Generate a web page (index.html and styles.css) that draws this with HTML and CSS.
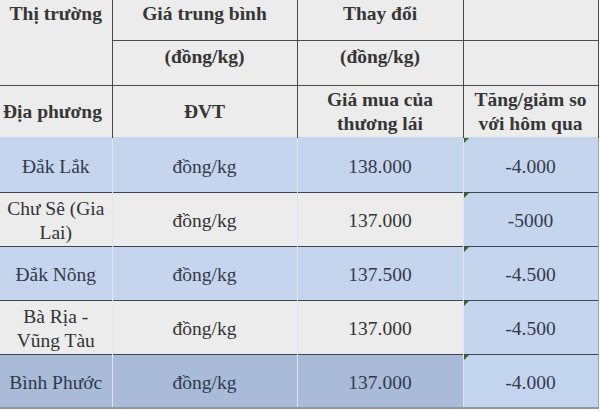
FILE: index.html
```html
<!DOCTYPE html>
<html lang="vi">
<head>
<meta charset="utf-8">
<link rel="stylesheet" href="styles.css">
</head>
<body>
<table class="price">
  <colgroup>
    <col class="c1"><col class="c2"><col class="c3"><col class="c4">
  </colgroup>
  <thead>
    <tr class="h1">
      <th rowspan="2" class="top">Thị trường</th>
      <th>Giá trung bình</th>
      <th>Thay đổi</th>
      <th></th>
    </tr>
    <tr class="h2">
      <th>(đồng/kg)</th>
      <th>(đồng/kg)</th>
      <th></th>
    </tr>
    <tr class="h3">
      <th>Địa phương</th>
      <th>ĐVT</th>
      <th>Giá mua của thương lái</th>
      <th>Tăng/giảm so với hôm qua</th>
    </tr>
  </thead>
  <tbody>
    <tr class="blue">
      <td>Đắk Lắk</td><td>đồng/kg</td><td>138.000</td><td class="chg"><span class="flag"></span>-4.000</td>
    </tr>
    <tr class="grey">
      <td>Chư Sê (Gia Lai)</td><td>đồng/kg</td><td>137.000</td><td class="chg"><span class="flag"></span>-5000</td>
    </tr>
    <tr class="blue">
      <td>Đắk Nông</td><td>đồng/kg</td><td>137.500</td><td class="chg"><span class="flag"></span>-4.500</td>
    </tr>
    <tr class="grey">
      <td>Bà Rịa - Vũng Tàu</td><td>đồng/kg</td><td>137.000</td><td class="chg"><span class="flag"></span>-4.500</td>
    </tr>
    <tr class="dark last">
      <td>Bình Phước</td><td>đồng/kg</td><td>137.000</td><td class="chg"><span class="flag"></span>-4.000</td>
    </tr>
  </tbody>
</table>
</body>
</html>
```
FILE: styles.css
```css
html, body {
  margin: 0;
  padding: 0;
  background: #ffffff;
}
.price {
  border-collapse: collapse;
  table-layout: fixed;
  width: 598px;
  font-family: "Liberation Serif", "Times New Roman", serif;
  font-size: 19.5px;
  color: #333333;
}
.c1 { width: 112px; }
.c2 { width: 185px; }
.c3 { width: 166px; }
.c4 { width: 135px; }

.price th {
  background: #ececec;
  font-weight: bold;
  color: #363636;
  text-align: center;
  border-left: 1px solid #4a4a4a;
  border-right: 1px solid #4a4a4a;
  padding: 0 3px;
  line-height: 22px;
}
.price th:first-child { border-left: none; }
.h1 th { height: 40px; vertical-align: top; padding-top: 3px; border-bottom: 1px solid #4a4a4a; box-sizing: border-box; }
.h2 th { height: 45px; vertical-align: top; padding-top: 5px; border-bottom: 1px solid #4a4a4a; box-sizing: border-box; }
.h3 th { height: 52px; vertical-align: middle; padding-top: 2px; box-sizing: border-box; line-height: 24px; }
.h3 th:first-child { text-align: left; padding-left: 3px; padding-right: 0; }

.price td {
  text-align: center;
  vertical-align: middle;
  height: 54px;
  box-sizing: border-box;
  padding: 4px 4px 0;
  line-height: 24px;
  border-top: 1px solid #3e4652;
  border-left: 1px solid #dfe5ef;
  border-right: 1px solid #dfe5ef;
}
.price tbody tr:first-child td { border-top: 1px solid #c9d4e6; height: 55px; }
.price td:first-child { border-left: none; }
.price td:last-child { border-right: 1px solid #9aa4b4; }
.price tr.last td { border-bottom: 2px solid #8c96a8; height: 54px; }

.blue td { background: #c6d5ee; color: #33394a; }
.grey td { background: #ececec; color: #333333; }
.dark td { background: #a9bbd8; color: #2f3a50; }
.price td.chg { background: #c6d5ee; color: #33394a; position: relative; }
.dark td.chg { background: #c3d4ef; }

.flag {
  position: absolute;
  left: 0;
  top: 0;
  width: 0;
  height: 0;
  border-top: 5px solid #2e6b2e;
  border-right: 5px solid transparent;
}
```
